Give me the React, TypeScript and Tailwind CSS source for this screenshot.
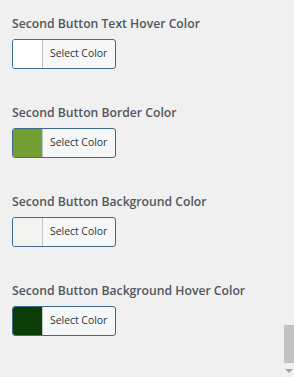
import React from "react";

const fields = [
  { label: "Second Button Text Hover Color", color: "bg-white" },
  { label: "Second Button Border Color", color: "bg-[#739e34]" },
  { label: "Second Button Background Color", color: "bg-[#f3f3f1]" },
  { label: "Second Button Background Hover Color", color: "bg-[#0c3d06]" },
];

const ColorField = ({ label, color }: { label: string; color: string }) => (
  <div className="flex flex-col">
    <h3 className="text-[12.2px] leading-[20px] font-semibold text-[#50575e]">
      {label}
    </h3>
    <button className="mt-[5px] flex h-[30px] w-[104px] overflow-hidden rounded-[3px] border border-[#3d6a8c] bg-[#f6f7f7] p-0 text-left">
      <span className={`h-full w-[30px] border-r border-[#c3c4c7] ${color}`} />
      <span className="flex h-full flex-1 items-center pl-[7px] text-[10.4px] text-[#2c3338]">
        Select Color
      </span>
    </button>
  </div>
);

export default function App() {
  return (
    <div
      className="relative h-[377px] w-[294px] overflow-hidden bg-[#f0f0f0]"
      style={{ fontFamily: "'Open Sans', 'Noto Sans', sans-serif" }}
    >
      <div className="flex flex-col gap-[34px] px-3 pt-[14px]">
        {fields.map((f) => (
          <ColorField key={f.label} label={f.label} color={f.color} />
        ))}
      </div>

      {/* scrollbar */}
      <div className="absolute right-0 top-[325px] h-[38px] w-[10px] bg-[#c1c1c1]" />
      <div className="absolute right-[1px] top-[369px] h-0 w-0 border-x-[4px] border-t-[4px] border-x-transparent border-t-[#a3a3a3]" />
    </div>
  );
}
